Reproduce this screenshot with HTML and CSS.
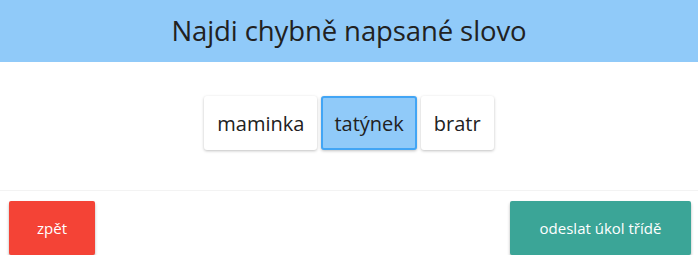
FILE: index.html
```html
<!DOCTYPE html>
<html lang="cs">
<head>
  <meta charset="UTF-8" />
  <title>Najdi chybně napsané slovo</title>
  <link rel="stylesheet" href="styles.css">
</head>
<body>
  <div class="header">Najdi chybně napsané slovo</div>
  <div class="words">
    <button class="word">maminka</button>
    <button class="word selected">tatýnek</button>
    <button class="word">bratr</button>
  </div>
  <div class="footer">
    <button class="btn back">zpět</button>
    <button class="btn send">odeslat úkol třídě</button>
  </div>
</body>
</html>
```

FILE: styles.css
```css
body {
  margin: 0;
  font-family: 'Open Sans', 'Noto Sans', sans-serif;
  color: #212121;
  background: #fff;
}

.header {
  height: 62px;
  line-height: 62px;
  background: #90caf9;
  text-align: center;
  font-size: 27.5px;
  letter-spacing: -0.1px;
}

.words {
  display: flex;
  justify-content: center;
  gap: 4px;
  padding: 34px 0 40px;
  border-bottom: 1px solid #f3f3f3;
}

.word {
  font-family: inherit;
  font-size: 20px;
  color: #212121;
  height: 54px;
  padding: 0 11px;
  background: #fff;
  border: 2px solid #fff;
  border-radius: 3px;
  box-shadow: 0 1px 3px rgba(0,0,0,0.25);
  cursor: pointer;
}

.word.selected {
  background: #90caf9;
  border-color: #42a5f5;
}

.footer {
  display: flex;
  justify-content: space-between;
  padding: 10px 7px 0 9px;
}

.btn {
  font-family: inherit;
  font-size: 15px;
  color: #fff;
  height: 54px;
  border: none;
  border-radius: 2px;
  box-shadow: 0 2px 3px rgba(0,0,0,0.3);
  cursor: pointer;
}

.back {
  width: 86px;
  background: #f44336;
}

.send {
  width: 181px;
  background: #3ba597;
}
```
